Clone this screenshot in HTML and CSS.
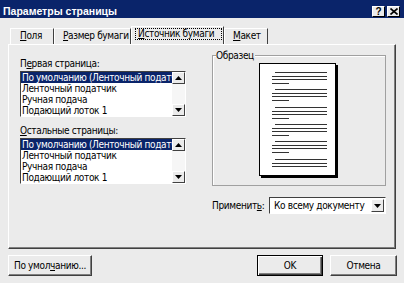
FILE: index.html
```html
<!DOCTYPE html>
<html lang="ru">
<head>
  <meta charset="UTF-8">
  <title>Параметры страницы</title>
  <link rel="stylesheet" href="styles.css">
</head>
<body>
  <div class="dialog">
    <div class="titlebar">
      <span class="title">Параметры страницы</span>
      <div class="caption-buttons">
        <span class="cap-btn help">?</span>
        <span class="cap-btn">
          <svg width="8" height="7" viewBox="0 0 8 7"><path d="M0.5 0.5 L7.5 6.5 M7.5 0.5 L0.5 6.5" stroke="#000" stroke-width="1.6"/></svg>
        </span>
      </div>
    </div>

    <div class="tabs">
      <div class="tab t1"><u>П</u>оля</div>
      <div class="tab t2"><u>Р</u>азмер бумаги</div>
      <div class="tab active"><span class="focus"><u>И</u>сточник бумаги</span></div>
      <div class="tab t4"><u>М</u>акет</div>
    </div>

    <div class="panel">
      <div class="col-left">
        <div class="label first">П<u>е</u>рвая страница:</div>
        <div class="listbox">
          <ul class="items">
            <li class="selected">По умолчанию (Ленточный податчик)</li>
            <li>Ленточный податчик</li>
            <li>Ручная подача</li>
            <li>Подающий лоток 1</li>
          </ul>
          <div class="scrollbar">
            <div class="sb-btn"><svg width="7" height="4" viewBox="0 0 7 4"><path d="M3.5 0 L7 4 L0 4 Z" fill="#000"/></svg></div>
            <div class="sb-track"></div>
            <div class="sb-btn"><svg width="7" height="4" viewBox="0 0 7 4"><path d="M0 0 L7 0 L3.5 4 Z" fill="#000"/></svg></div>
          </div>
        </div>

        <div class="label second"><u>О</u>стальные страницы:</div>
        <div class="listbox">
          <ul class="items">
            <li class="selected">По умолчанию (Ленточный податчик)</li>
            <li>Ленточный податчик</li>
            <li>Ручная подача</li>
            <li>Подающий лоток 1</li>
          </ul>
          <div class="scrollbar">
            <div class="sb-btn"><svg width="7" height="4" viewBox="0 0 7 4"><path d="M3.5 0 L7 4 L0 4 Z" fill="#000"/></svg></div>
            <div class="sb-track"></div>
            <div class="sb-btn"><svg width="7" height="4" viewBox="0 0 7 4"><path d="M0 0 L7 0 L3.5 4 Z" fill="#000"/></svg></div>
          </div>
        </div>
      </div>

      <div class="col-right">
        <div class="group">
          <span class="legend">Образец</span>
          <div class="page">
            <svg width="75" height="111" viewBox="0 0 75 111" stroke="#333" stroke-width="1">
              <path d="M15 8.5H67 M12 12.5H67 M12 15.5H67 M12 19.5H29"/>
              <path d="M15 25.5H67 M12 29.5H67 M12 32.5H67 M12 36.5H29"/>
              <path d="M15 43.5H67 M12 47.5H67 M12 50.5H67 M12 54.5H29"/>
              <path d="M15 60.5H67 M12 64.5H67 M12 67.5H67 M12 71.5H29"/>
              <path d="M15 77.5H67 M12 81.5H67 M12 84.5H67 M12 88.5H29"/>
              <path d="M15 95.5H67 M12 99.5H67 M12 102.5H67"/>
            </svg>
          </div>
        </div>
        <div class="apply-row">
          <span>Применит<u>ь</u>:</span>
          <div class="combo">
            <span class="combo-value">Ко всему документу</span>
            <div class="combo-btn"><svg width="7" height="4" viewBox="0 0 7 4"><path d="M0 0 L7 0 L3.5 4 Z" fill="#000"/></svg></div>
          </div>
        </div>
      </div>
    </div>

    <div class="footer">
      <button class="btn defaults">По умол<u>ч</u>анию...</button>
      <div class="footer-right">
        <button class="btn ok">OK</button>
        <button class="btn">Отмена</button>
      </div>
    </div>
  </div>
</body>
</html>
```

FILE: styles.css
```css
* {
  box-sizing: border-box;
}

body {
  margin: 0;
  background-color: #ebebeb;
  font-family: 'DejaVu Sans Condensed', 'DejaVu Sans', sans-serif;
  font-stretch: condensed;
  font-size: 10px;
  letter-spacing: -0.35px;
  color: #000;
}

.dialog {
  width: 404px;
  height: 283px;
  overflow: hidden;
  white-space: nowrap;
}

u {
  text-decoration-thickness: 1px;
  text-underline-offset: 1px;
}

/* title bar */
.titlebar {
  height: 18px;
  background-color: #0a246a;
  display: flex;
  align-items: center;
  justify-content: space-between;
  padding: 4px 4px 0 3px;
}

.title {
  color: #fff;
  font-family: 'Liberation Sans', Arial, sans-serif;
  font-stretch: normal;
  font-weight: bold;
  font-size: 10.5px;
  letter-spacing: 0;
}

.caption-buttons {
  display: flex;
  gap: 2px;
}

.cap-btn {
  width: 13px;
  height: 11px;
  background-color: #ebebeb;
  border: 1px solid;
  border-color: #fff #000 #000 #fff;
  display: flex;
  align-items: center;
  justify-content: center;
}

.cap-btn.help {
  font-family: 'Liberation Sans', Arial, sans-serif;
  font-weight: bold;
  font-size: 10px;
  line-height: 9px;
  letter-spacing: 0;
}

/* tabs */
.tabs {
  display: flex;
  align-items: flex-end;
  height: 26px;
  padding-left: 10px;
}

.tab {
  height: 16px;
  line-height: 14px;
  padding-left: 8px;
  border-left: 1px solid #fff;
  border-top: 1px solid #fff;
  border-right: 1px solid #404040;
}

.tab.t1 {
  width: 44px;
  padding-left: 9px;
}

.tab.t2 {
  width: 77px;
}

.tab.active {
  width: 93px;
  height: 18px;
  padding-left: 3px;
}

.tab.t4 {
  width: 44px;
}

.focus {
  display: block;
  margin-top: 1px;
  width: 87px;
  height: 12px;
  line-height: 10px;
  padding-left: 2px;
  border: 1px dotted #000;
}

/* tab page */
.panel {
  margin: 0 8px;
  height: 205px;
  border: 1px solid;
  border-color: #fff #404040 #404040 #fff;
  box-shadow: inset -1px -1px 0 #808080;
  display: flex;
  gap: 26px;
  padding: 10px 0 0 11px;
}

.col-left {
  width: 166px;
}

.label {
  line-height: 13px;
}

.label.first {
  margin-top: 2px;
}

.label.second {
  margin-top: 7px;
}

.listbox {
  margin-top: 1px;
  height: 46px;
  display: flex;
  background-color: #fff;
  border: 1px solid;
  border-color: #404040 #fff #fff #404040;
}

.items {
  list-style: none;
  margin: 0;
  padding: 0;
  width: 151px;
  overflow: hidden;
}

.items li {
  height: 11px;
  line-height: 11px;
  padding-left: 1px;
  overflow: hidden;
}

.items li.selected {
  background-color: #0a246a;
  color: #fff;
}

.scrollbar {
  width: 13px;
  display: flex;
  flex-direction: column;
}

.sb-btn {
  height: 12px;
  background-color: #ebebeb;
  border: 1px solid;
  border-color: #fff #404040 #404040 #fff;
  display: flex;
  align-items: center;
  justify-content: center;
}

.sb-track {
  flex: 1;
  background-color: #f6f6f6;
}

/* preview */
.col-right {
  width: 174px;
}

.group {
  height: 131px;
  border: 1px solid #a0a0a0;
  box-shadow: inset 1px 1px 0 #fff;
}

.legend {
  display: table;
  margin: -7px 0 0 3px;
  padding: 0 1px 0 0;
  line-height: 13px;
  background-color: #ebebeb;
}

.page {
  width: 77px;
  height: 113px;
  margin: 1px 0 0 46px;
  background-color: #fff;
  border: 1px solid #000;
  box-shadow: 2px 2px 0 #000;
}

.page svg {
  display: block;
}

.apply-row {
  margin-top: 11px;
  display: flex;
  align-items: center;
  justify-content: space-between;
}

.combo {
  width: 117px;
  height: 17px;
  display: flex;
  align-items: center;
  padding: 1px;
  background-color: #fff;
  border: 1px solid;
  border-color: #404040 #fff #fff #404040;
}

.combo-value {
  flex: 1;
  padding-left: 3px;
}

.combo-btn {
  width: 13px;
  height: 13px;
  background-color: #ebebeb;
  border: 1px solid;
  border-color: #fff #404040 #404040 #fff;
  display: flex;
  align-items: center;
  justify-content: center;
}

/* bottom buttons */
.footer {
  display: flex;
  justify-content: space-between;
  padding: 6px 7px 0 8px;
}

.footer-right {
  display: flex;
  gap: 7px;
}

.btn {
  height: 21px;
  font-family: inherit;
  font-stretch: condensed;
  font-size: 10px;
  letter-spacing: -0.35px;
  color: #000;
  background-color: #ebebeb;
  border: 1px solid;
  border-color: #fff #404040 #404040 #fff;
  box-shadow: inset -1px -1px 0 #808080;
  padding: 0;
  white-space: nowrap;
}

.btn.defaults {
  width: 84px;
}

.btn.ok {
  width: 66px;
  border-color: #000;
  box-shadow: inset 1px 1px 0 #fff, inset -1px -1px 0 #404040, inset -2px -2px 0 #808080;
}

.footer-right .btn {
  width: 67px;
}

.footer-right .btn.ok {
  width: 66px;
}
```
